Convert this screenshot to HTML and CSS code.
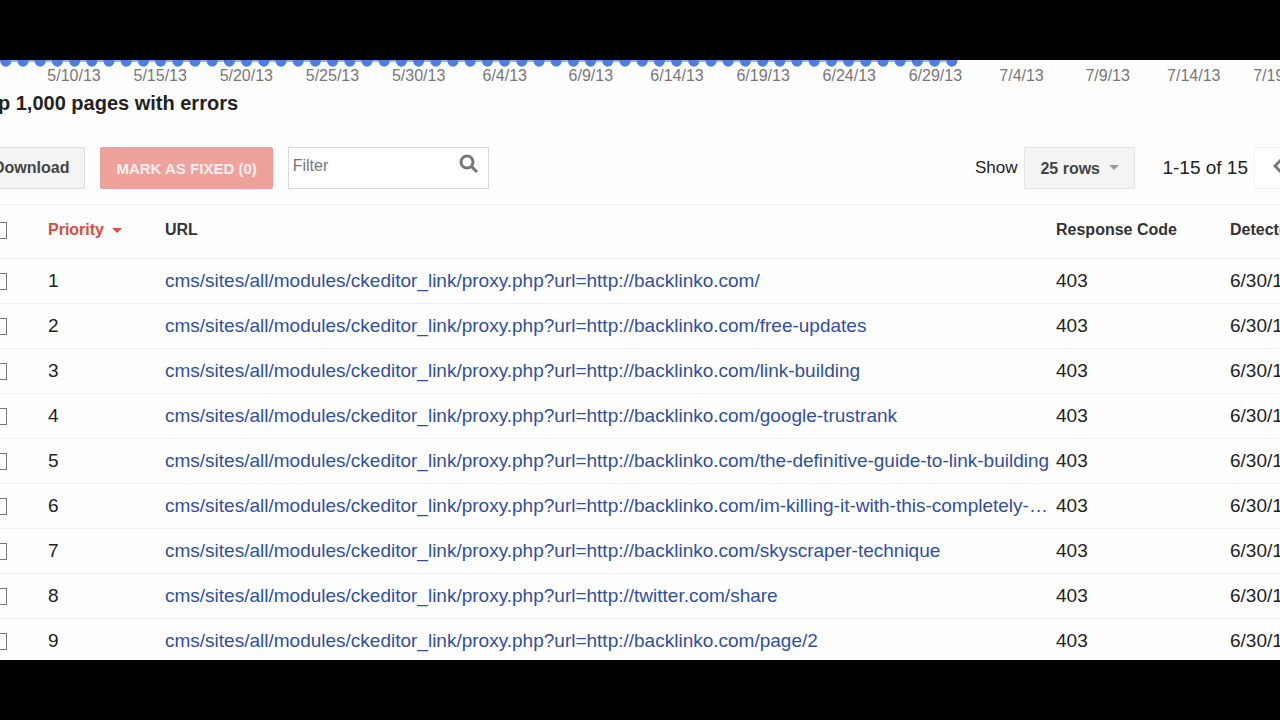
FILE: index.html
```html
<!DOCTYPE html>
<html lang="en">
<head>
    <meta charset="UTF-8">
    <meta name="viewport" content="width=device-width, initial-scale=1.0">
    <title>Crawl Errors</title>
    <link rel="stylesheet" href="styles.css">
</head>
<body>
    <main class="viewport">
        <div class="chart">
            <!-- Data points along the bottom of the chart -->
            <svg class="chart-dots" width="960" height="8" viewBox="0 0 960 8" aria-hidden="true">
                <path d="M0 1H952" stroke="#8fb4f5" stroke-width="2"/>
                <path d="M5.8 1.2H953" stroke="#4a80e0" stroke-width="11" stroke-linecap="round" stroke-dasharray="0 17.2"/>
            </svg>
            <div class="chart-dates">
                <span>5/10/13</span>
                <span>5/15/13</span>
                <span>5/20/13</span>
                <span>5/25/13</span>
                <span>5/30/13</span>
                <span>6/4/13</span>
                <span>6/9/13</span>
                <span>6/14/13</span>
                <span>6/19/13</span>
                <span>6/24/13</span>
                <span>6/29/13</span>
                <span>7/4/13</span>
                <span>7/9/13</span>
                <span>7/14/13</span>
                <span>7/19/13</span>
            </div>
        </div>

        <section class="panel">
            <h2>Top 1,000 pages with errors</h2>

            <div class="toolbar">
                <button class="btn" type="button">Download</button>
                <button class="btn btn-fixed" type="button">MARK AS FIXED (0)</button>
                <div class="filter">
                    <input type="text" placeholder="Filter" aria-label="Filter">
                    <svg width="22" height="22" viewBox="0 0 22 22" aria-hidden="true">
                        <circle cx="9" cy="9" r="6" fill="none" stroke="#777" stroke-width="3"/>
                        <path d="M13 13L19 19" stroke="#777" stroke-width="3"/>
                    </svg>
                </div>
                <div class="pager">
                    <label for="rows">Show</label>
                    <div class="select">
                        <select id="rows">
                            <option>25 rows</option>
                            <option>50 rows</option>
                            <option>100 rows</option>
                        </select>
                    </div>
                    <span class="range">1-15 of 15</span>
                    <button class="btn btn-prev" type="button" aria-label="Previous page">
                        <svg width="10" height="14" viewBox="0 0 10 14" aria-hidden="true">
                            <path d="M8 1L2 7L8 13" fill="none" stroke="#777" stroke-width="3"/>
                        </svg>
                    </button>
                </div>
            </div>

            <table>
                <colgroup>
                    <col class="col-check">
                    <col class="col-priority">
                    <col>
                    <col class="col-code">
                    <col class="col-date">
                </colgroup>
                <thead>
                    <tr>
                        <th><input type="checkbox" aria-label="Select all"></th>
                        <th class="sorted">Priority</th>
                        <th>URL</th>
                        <th>Response Code</th>
                        <th>Detected</th>
                    </tr>
                </thead>
                <tbody>
                    <tr>
                        <td><input type="checkbox" aria-label="Select row 1"></td>
                        <td>1</td>
                        <td><a href="#">cms/sites/all/modules/ckeditor_link/proxy.php?url=http://backlinko.com/</a></td>
                        <td>403</td>
                        <td>6/30/13</td>
                    </tr>
                    <tr>
                        <td><input type="checkbox" aria-label="Select row 2"></td>
                        <td>2</td>
                        <td><a href="#">cms/sites/all/modules/ckeditor_link/proxy.php?url=http://backlinko.com/free-updates</a></td>
                        <td>403</td>
                        <td>6/30/13</td>
                    </tr>
                    <tr>
                        <td><input type="checkbox" aria-label="Select row 3"></td>
                        <td>3</td>
                        <td><a href="#">cms/sites/all/modules/ckeditor_link/proxy.php?url=http://backlinko.com/link-building</a></td>
                        <td>403</td>
                        <td>6/30/13</td>
                    </tr>
                    <tr>
                        <td><input type="checkbox" aria-label="Select row 4"></td>
                        <td>4</td>
                        <td><a href="#">cms/sites/all/modules/ckeditor_link/proxy.php?url=http://backlinko.com/google-trustrank</a></td>
                        <td>403</td>
                        <td>6/30/13</td>
                    </tr>
                    <tr>
                        <td><input type="checkbox" aria-label="Select row 5"></td>
                        <td>5</td>
                        <td><a href="#">cms/sites/all/modules/ckeditor_link/proxy.php?url=http://backlinko.com/the-definitive-guide-to-link-building</a></td>
                        <td>403</td>
                        <td>6/30/13</td>
                    </tr>
                    <tr>
                        <td><input type="checkbox" aria-label="Select row 6"></td>
                        <td>6</td>
                        <td><a href="#">cms/sites/all/modules/ckeditor_link/proxy.php?url=http://backlinko.com/im-killing-it-with-this-completely-…</a></td>
                        <td>403</td>
                        <td>6/30/13</td>
                    </tr>
                    <tr>
                        <td><input type="checkbox" aria-label="Select row 7"></td>
                        <td>7</td>
                        <td><a href="#">cms/sites/all/modules/ckeditor_link/proxy.php?url=http://backlinko.com/skyscraper-technique</a></td>
                        <td>403</td>
                        <td>6/30/13</td>
                    </tr>
                    <tr>
                        <td><input type="checkbox" aria-label="Select row 8"></td>
                        <td>8</td>
                        <td><a href="#">cms/sites/all/modules/ckeditor_link/proxy.php?url=http://twitter.com/share</a></td>
                        <td>403</td>
                        <td>6/30/13</td>
                    </tr>
                    <tr>
                        <td><input type="checkbox" aria-label="Select row 9"></td>
                        <td>9</td>
                        <td><a href="#">cms/sites/all/modules/ckeditor_link/proxy.php?url=http://backlinko.com/page/2</a></td>
                        <td>403</td>
                        <td>6/30/13</td>
                    </tr>
                </tbody>
            </table>
        </section>
    </main>
</body>
</html>
```
FILE: styles.css
```css
* {
    box-sizing: border-box;
}

body {
    margin: 0;
    padding: 60px 0;
    height: 100vh;
    background-color: #000;
    color: #222;
    font-family: "Liberation Sans", Arial, sans-serif;
    font-size: 19px;
    overflow: hidden;
}

.viewport {
    height: 100%;
    background-color: #fefefe;
    overflow: hidden;
}

/* Chart */
.chart-dots {
    display: block;
}

.chart-dates {
    display: grid;
    grid-template-columns: repeat(15, 1fr);
    margin: 0 -43px 0 31px;
    color: #777;
    font-size: 16px;
    line-height: 16px;
    text-align: center;
}

/* The panel is wider than the window and is cut off on both sides */
.panel {
    margin: 0 -80px 0 -28px;
}

h2 {
    margin: 8px 0 32px;
    padding-left: 3px;
    font-size: 20px;
    line-height: 22px;
}

/* Toolbar */
.toolbar {
    display: flex;
    align-items: center;
    gap: 15px;
    height: 44px;
    padding-left: 5px;
}

.btn {
    height: 42px;
    padding: 0 15px;
    border: 1px solid #dcdcdc;
    border-radius: 2px;
    background-color: #f4f4f4;
    color: #444;
    font: bold 16px "Liberation Sans", Arial, sans-serif;
}

.btn-fixed {
    border-color: #ec9f99;
    background-color: #efa29c;
    color: #fdf0ef;
    font-size: 15px;
}

.filter {
    display: flex;
    width: 201px;
    height: 42px;
    padding: 5px 8px 0 4px;
    border: 1px solid #d9d9d9;
    background-color: #fff;
}

.filter input {
    flex: 1;
    min-width: 0;
    height: 26px;
    padding: 0;
    border: none;
    outline: none;
    background: none;
    color: #333;
    font: 16px "Liberation Sans", Arial, sans-serif;
}

.filter input::placeholder {
    color: #777;
}

.pager {
    display: flex;
    align-items: center;
    margin-left: auto;
}

.pager label {
    margin-right: 7px;
    font-size: 17px;
}

.select {
    position: relative;
    margin-right: 27px;
}

.select select {
    width: 111px;
    height: 42px;
    padding: 0 15px;
    border: 1px solid #e2e2e2;
    border-radius: 2px;
    background-color: #f4f4f4;
    color: #444;
    font: bold 16px "Liberation Sans", Arial, sans-serif;
    appearance: none;
}

.select::after {
    content: "";
    position: absolute;
    top: 18px;
    right: 16px;
    border: 5px solid transparent;
    border-top-color: #999;
    border-bottom: none;
}

.range {
    margin-right: 6px;
}

.btn-prev {
    width: 106px;
    padding: 0 18px;
    border-color: #f2f2f2;
    background-color: #fff;
    text-align: left;
}

/* Table */
table {
    width: 100%;
    margin-top: 14px;
    border-collapse: collapse;
    table-layout: fixed;
}

.col-check {
    width: 76px;
}

.col-priority {
    width: 117px;
}

.col-code {
    width: 174px;
}

.col-date {
    width: 130px;
}

th,
td {
    height: 45px;
    padding: 0;
    border-top: 1px solid #f1f1f1;
    text-align: left;
    white-space: nowrap;
}

th {
    height: 54px;
    padding-bottom: 3px;
    color: #333;
    font-size: 16px;
}

th.sorted {
    color: #dd4b39;
}

.sorted::after {
    content: "";
    display: inline-block;
    margin-left: 8px;
    border: 5px solid transparent;
    border-top-color: #dd4b39;
    border-bottom: none;
    vertical-align: middle;
}

input[type="checkbox"] {
    display: block;
    width: 17px;
    height: 17px;
    margin: 0 0 0 18px;
    border: 1px solid #777;
    background-color: #fff;
    appearance: none;
}

a {
    color: #2f4fa5;
    text-decoration: none;
}
```
